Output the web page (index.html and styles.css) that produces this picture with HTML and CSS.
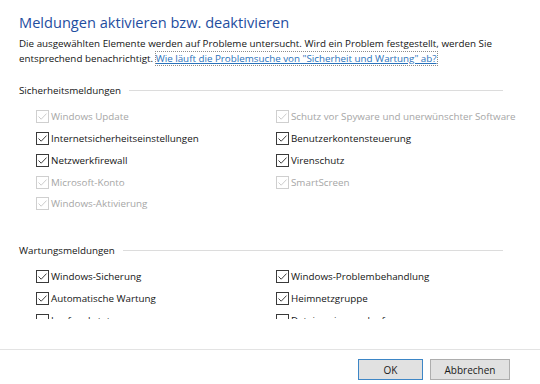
FILE: index.html
```html
<!DOCTYPE html>
<html lang="de">
<head>
<meta charset="utf-8">
<link rel="stylesheet" href="styles.css">
</head>
<body>
<div class="dialog">
  <div class="content">
    <h1 class="title">Meldungen aktivieren bzw. deaktivieren</h1>
    <p class="intro">Die ausgewählten Elemente werden auf Probleme untersucht. Wird ein Problem festgestellt, werden Sie entsprechend benachrichtigt. <a class="link" href="#">Wie läuft die Problemsuche von "Sicherheit und Wartung" ab?</a></p>

    <div class="group">
      <div class="legend"><span>Sicherheitsmeldungen</span><span class="rule"></span></div>
      <div class="grid">
        <label class="cb disabled"><span class="box"><svg viewBox="0 0 11 11"><path d="M1.5 5.5 L4.2 8.2 L9.5 2.6"/></svg></span>Windows Update</label>
        <label class="cb disabled"><span class="box"><svg viewBox="0 0 11 11"><path d="M1.5 5.5 L4.2 8.2 L9.5 2.6"/></svg></span>Schutz vor Spyware und unerwünschter Software</label>
        <label class="cb"><span class="box"><svg viewBox="0 0 11 11"><path d="M1.5 5.5 L4.2 8.2 L9.5 2.6"/></svg></span>Internetsicherheitseinstellungen</label>
        <label class="cb"><span class="box"><svg viewBox="0 0 11 11"><path d="M1.5 5.5 L4.2 8.2 L9.5 2.6"/></svg></span>Benutzerkontensteuerung</label>
        <label class="cb"><span class="box"><svg viewBox="0 0 11 11"><path d="M1.5 5.5 L4.2 8.2 L9.5 2.6"/></svg></span>Netzwerkfirewall</label>
        <label class="cb"><span class="box"><svg viewBox="0 0 11 11"><path d="M1.5 5.5 L4.2 8.2 L9.5 2.6"/></svg></span>Virenschutz</label>
        <label class="cb disabled"><span class="box"><svg viewBox="0 0 11 11"><path d="M1.5 5.5 L4.2 8.2 L9.5 2.6"/></svg></span>Microsoft-Konto</label>
        <label class="cb disabled"><span class="box"><svg viewBox="0 0 11 11"><path d="M1.5 5.5 L4.2 8.2 L9.5 2.6"/></svg></span>SmartScreen</label>
        <label class="cb disabled"><span class="box"><svg viewBox="0 0 11 11"><path d="M1.5 5.5 L4.2 8.2 L9.5 2.6"/></svg></span>Windows-Aktivierung</label>
      </div>
    </div>

    <div class="group group-2">
      <div class="legend"><span>Wartungsmeldungen</span><span class="rule"></span></div>
      <div class="grid grid-2">
        <label class="cb"><span class="box"><svg viewBox="0 0 11 11"><path d="M1.5 5.5 L4.2 8.2 L9.5 2.6"/></svg></span>Windows-Sicherung</label>
        <label class="cb"><span class="box"><svg viewBox="0 0 11 11"><path d="M1.5 5.5 L4.2 8.2 L9.5 2.6"/></svg></span>Windows-Problembehandlung</label>
        <label class="cb"><span class="box"><svg viewBox="0 0 11 11"><path d="M1.5 5.5 L4.2 8.2 L9.5 2.6"/></svg></span>Automatische Wartung</label>
        <label class="cb"><span class="box"><svg viewBox="0 0 11 11"><path d="M1.5 5.5 L4.2 8.2 L9.5 2.6"/></svg></span>Heimnetzgruppe</label>
        <label class="cb"><span class="box"></span>Laufwerkstatus</label>
        <label class="cb"><span class="box"></span>Dateiversionsverlauf</label>
      </div>
    </div>
  </div>
  <div class="footer">
    <button class="btn btn-default">OK</button>
    <button class="btn btn-cancel">Abbrechen</button>
  </div>
</div>
</body>
</html>
```

FILE: styles.css
```css
* { box-sizing: border-box; }
html, body { margin: 0; padding: 0; background: #ffffff; }
body {
  font-family: "Open Sans", "Noto Sans", sans-serif;
  font-size: 9.8px;
  color: #141414;
}
.dialog {
  width: 540px;
  height: 384px;
  display: flex;
  flex-direction: column;
}
.content {
  height: 319px;
  flex: none;
  overflow: hidden;
  padding: 12px 19px 0 19px;
}
.title {
  margin: 0;
  font-size: 14.6px;
  font-weight: 400;
  line-height: 20px;
  color: #1f4e9f;
}
.intro {
  margin: 5px 0 0 0;
  line-height: 14.5px;
}
.link {
  color: #2a72bb;
  text-decoration: underline;
  outline: 1px dotted #8a8a8a;
  outline-offset: 0;
}
.group { margin-top: 16px; }
.group-2 { margin-top: 28px; }
.legend {
  display: flex;
  align-items: center;
  gap: 8px;
  height: 16px;
  padding-right: 18px;
}
.rule {
  flex: 1;
  height: 1px;
  background: #dcdcdc;
}
.grid {
  display: grid;
  grid-template-columns: 240px 1fr;
  grid-auto-rows: 21.75px;
  padding-left: 17px;
  margin-top: 8px;
}
.grid-2 { margin-top: 7px; }
.cb {
  display: flex;
  align-items: center;
  gap: 2px;
  white-space: nowrap;
}
.box {
  width: 13px;
  height: 13px;
  border: 1px solid #3a3a3a;
  background: #fff;
  flex: none;
  display: flex;
}
.box svg { width: 11px; height: 11px; }
.box path {
  fill: none;
  stroke: #2a2a2a;
  stroke-width: 0.9;
}
.disabled { color: #a6a6a6; }
.disabled .box { border-color: #cfcfcf; }
.disabled .box path { stroke: #c6c6c6; }
.footer {
  margin-top: 30px;
  border-top: 1px solid #e3e3e3;
  display: flex;
  justify-content: flex-end;
  gap: 7px;
  padding: 9px 30px 0 0;
}
.btn {
  height: 21px;
  font-family: inherit;
  font-size: 10px;
  color: #1a1a1a;
  background: #e1e1e1;
  border: 1px solid #adadad;
  padding: 0;
}
.btn-default { width: 65px; border-color: #3d86c6; }
.btn-cancel { width: 80px; }
```
